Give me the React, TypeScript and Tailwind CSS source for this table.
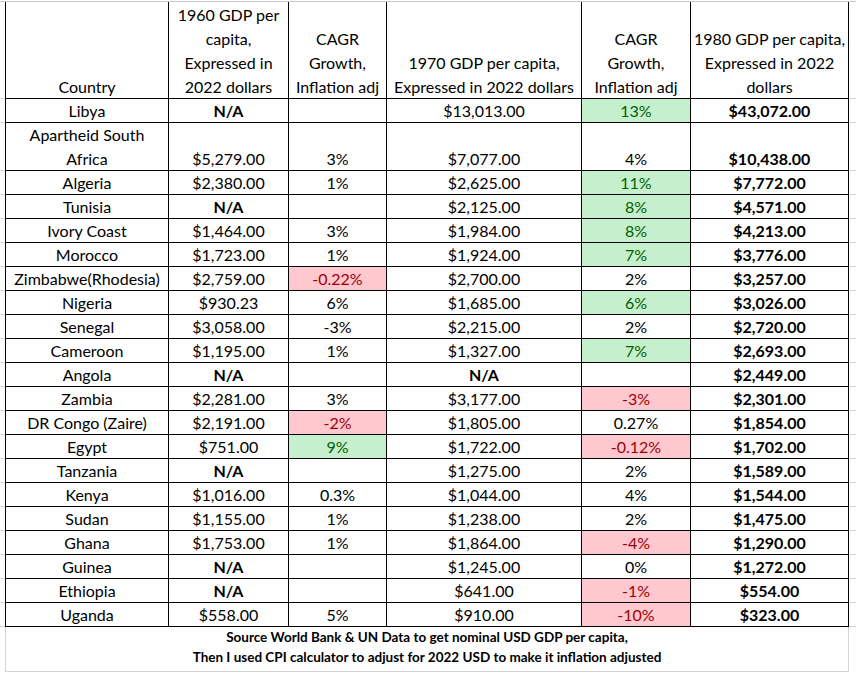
type Tone = "green" | "red" | undefined;

interface Cell {
  v: string;
  bold?: boolean;
  tone?: Tone;
}

interface Row {
  country: string[];
  cells: Cell[];
  tall?: boolean;
}

const na: Cell = { v: "N/A", bold: true };
const blank: Cell = { v: "" };
const c = (v: string, tone?: Tone): Cell => ({ v, tone });
const b = (v: string): Cell => ({ v, bold: true });

const rows: Row[] = [
  { country: ["Libya"], cells: [na, blank, c("$13,013.00"), c("13%", "green"), b("$43,072.00")] },
  {
    country: ["Apartheid South", "Africa"],
    tall: true,
    cells: [c("$5,279.00"), c("3%"), c("$7,077.00"), c("4%"), b("$10,438.00")],
  },
  { country: ["Algeria"], cells: [c("$2,380.00"), c("1%"), c("$2,625.00"), c("11%", "green"), b("$7,772.00")] },
  { country: ["Tunisia"], cells: [na, blank, c("$2,125.00"), c("8%", "green"), b("$4,571.00")] },
  { country: ["Ivory Coast"], cells: [c("$1,464.00"), c("3%"), c("$1,984.00"), c("8%", "green"), b("$4,213.00")] },
  { country: ["Morocco"], cells: [c("$1,723.00"), c("1%"), c("$1,924.00"), c("7%", "green"), b("$3,776.00")] },
  { country: ["Zimbabwe(Rhodesia)"], cells: [c("$2,759.00"), c("-0.22%", "red"), c("$2,700.00"), c("2%"), b("$3,257.00")] },
  { country: ["Nigeria"], cells: [c("$930.23"), c("6%"), c("$1,685.00"), c("6%", "green"), b("$3,026.00")] },
  { country: ["Senegal"], cells: [c("$3,058.00"), c("-3%"), c("$2,215.00"), c("2%"), b("$2,720.00")] },
  { country: ["Cameroon"], cells: [c("$1,195.00"), c("1%"), c("$1,327.00"), c("7%", "green"), b("$2,693.00")] },
  { country: ["Angola"], cells: [na, blank, na, blank, b("$2,449.00")] },
  { country: ["Zambia"], cells: [c("$2,281.00"), c("3%"), c("$3,177.00"), c("-3%", "red"), b("$2,301.00")] },
  { country: ["DR Congo (Zaire)"], cells: [c("$2,191.00"), c("-2%", "red"), c("$1,805.00"), c("0.27%"), b("$1,854.00")] },
  { country: ["Egypt"], cells: [c("$751.00"), c("9%", "green"), c("$1,722.00"), c("-0.12%", "red"), b("$1,702.00")] },
  { country: ["Tanzania"], cells: [na, blank, c("$1,275.00"), c("2%"), b("$1,589.00")] },
  { country: ["Kenya"], cells: [c("$1,016.00"), c("0.3%"), c("$1,044.00"), c("4%"), b("$1,544.00")] },
  { country: ["Sudan"], cells: [c("$1,155.00"), c("1%"), c("$1,238.00"), c("2%"), b("$1,475.00")] },
  { country: ["Ghana"], cells: [c("$1,753.00"), c("1%"), c("$1,864.00"), c("-4%", "red"), b("$1,290.00")] },
  { country: ["Guinea"], cells: [na, blank, c("$1,245.00"), c("0%"), b("$1,272.00")] },
  { country: ["Ethiopia"], cells: [na, blank, c("$641.00"), c("-1%", "red"), b("$554.00")] },
  { country: ["Uganda"], cells: [c("$558.00"), c("5%"), c("$910.00"), c("-10%", "red"), b("$323.00")] },
];

// widths of the five value columns (country column handled separately)
const widths = ["w-[120px]", "w-[98px]", "w-[195px]", "w-[109px]", "w-[158px]"];

const headers: string[][] = [
  ["1960 GDP per", "capita,", "Expressed in", "2022 dollars"],
  ["CAGR", "Growth,", "Inflation adj"],
  ["1970 GDP per capita,", "Expressed in 2022 dollars"],
  ["CAGR", "Growth,", "Inflation adj"],
  ["1980 GDP per capita,", "Expressed in 2022", "dollars"],
];

const toneClass = (tone: Tone) => {
  if (tone === "green") return "bg-[#c6efce] text-[#006100]";
  if (tone === "red") return "bg-[#ffc7ce] text-[#9c0006]";
  return "text-black";
};

const Lines = ({ lines }: { lines: string[] }) => (
  <div className="text-center -mb-px">
    {lines.map((l, i) => (
      <div key={i} className="whitespace-nowrap">
        {l}
      </div>
    ))}
  </div>
);

const App = () => {
  return (
    <div
      className="w-[856px] h-[673px] bg-white pt-px text-[16px] leading-[24px] text-black overflow-hidden"
      style={{ fontFamily: "Lato, 'Liberation Sans', sans-serif" }}
    >
      <div className="border-t border-[#c6c6c6]">
        {/* header */}
        <div className="flex h-[97px]">
          <div className="w-[5px] border-b border-[#d4d4d4]" />
          <div className="w-[164px] border-l border-r border-b border-black flex flex-col justify-end">
            <Lines lines={["Country"]} />
          </div>
          {headers.map((h, i) => (
            <div key={i} className={`${widths[i]} border-r border-b border-black flex flex-col justify-end`}>
              <Lines lines={h} />
            </div>
          ))}
          <div className="flex-1 border-b border-[#d4d4d4]" />
        </div>

        {rows.map((r, ri) => (
          <div key={ri} className={`flex ${r.tall ? "h-[48px]" : "h-[24px]"}`}>
            <div className="w-[5px] border-b border-[#d4d4d4]" />
            <div className="w-[164px] border-l border-r border-b border-black flex flex-col justify-end">
              <Lines lines={r.country} />
            </div>
            {r.cells.map((cell, ci) => (
              <div
                key={ci}
                className={`${widths[ci]} border-r border-b border-black flex flex-col justify-end ${toneClass(cell.tone)} ${
                  cell.bold ? "font-bold" : ""
                }`}
              >
                <div className="text-center whitespace-nowrap -mb-px">{cell.v}</div>
              </div>
            ))}
            <div className="flex-1 border-b border-[#d4d4d4]" />
          </div>
        ))}

        {/* source note */}
        <div className="ml-[5px] w-[844px] h-[45px] border-l border-r border-b border-[#d4d4d4] text-center font-bold text-[13.5px] leading-[20px]">
          <div>Source World Bank &amp; UN Data to get nominal USD GDP per capita,</div>
          <div>Then I used CPI calculator to adjust for 2022 USD to make it inflation adjusted</div>
        </div>
      </div>
    </div>
  );
};

export default App;
